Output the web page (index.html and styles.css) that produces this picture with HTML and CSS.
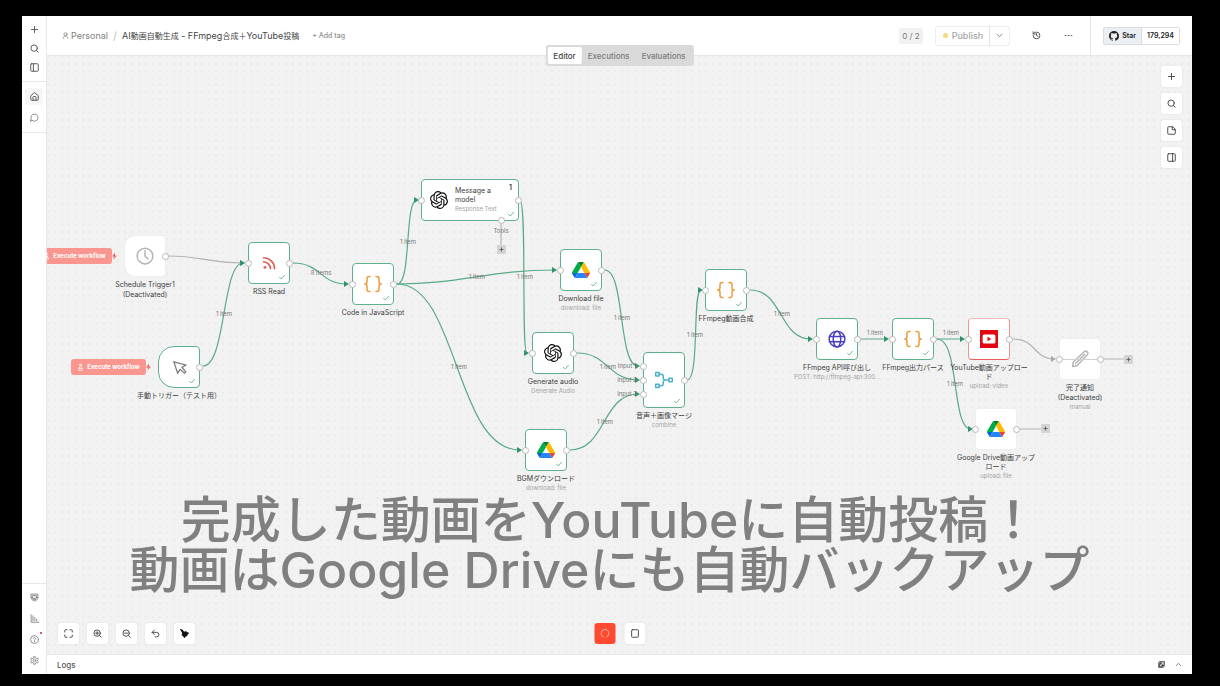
FILE: index.html
```html
<!DOCTYPE html>
<html lang="ja">
<head>
<meta charset="utf-8">
<title>AI動画自動生成 - FFmpeg合成＋YouTube投稿</title>
<link rel="stylesheet" href="styles.css">
</head>
<body>
<svg class="sprite" aria-hidden="true">
  <symbol id="plus" viewBox="0 0 24 24"><path d="M4 12h16M12 4v16"/></symbol>
  <symbol id="search" viewBox="0 0 24 24"><circle cx="11" cy="11" r="8.5"/><path d="m17 17 5 5"/></symbol>
  <symbol id="panel-left" viewBox="0 0 24 24"><rect x="2" y="2" width="20" height="20" rx="2"/><path d="M9 2v20"/></symbol>
  <symbol id="panel-right" viewBox="0 0 24 24"><rect x="2" y="2" width="20" height="20" rx="2"/><path d="M15 2v20"/></symbol>
  <symbol id="home" viewBox="0 0 24 24"><path d="M2 11a3 3 0 0 1 1-2l7-6a3 3 0 0 1 4 0l7 6a3 3 0 0 1 1 2v9a2 2 0 0 1-2 2H4a2 2 0 0 1-2-2z"/><path d="M8 22v-8a2 2 0 0 1 2-2h4a2 2 0 0 1 2 2v8"/></symbol>
  <symbol id="chat" viewBox="0 0 24 24"><path d="M6 20a9.500 9.500 0 1 0-3-4L1.500 22z"/></symbol>
  <symbol id="box" viewBox="0 0 24 24"><path d="M3 3h18v8c0 6-4 10-9 10s-9-4-9-10z"/><path d="M7 7h10v7H7zM3 12h4M17 12h4M9 17h6"/></symbol>
  <symbol id="chart" viewBox="0 0 24 24"><path d="M3 2v20h20M8 5v13M13 10v8M18 14v4"/></symbol>
  <symbol id="help" viewBox="0 0 24 24"><circle cx="12" cy="12" r="10.500"/><path d="M9 9.500a3 3 0 1 1 4.500 2.600c-1 .6-1.500 1-1.500 2M12 17v1"/></symbol>
  <symbol id="gear" viewBox="0 0 24 24"><path d="M10 2h4l.6 3 2.500 1.400 2.900-1 2 3.500-2.300 2v2.200l2.300 2-2 3.500-2.900-1-2.500 1.400-.6 3h-4l-.6-3-2.500-1.400-2.900 1-2-3.500 2.300-2v-2.200l-2.300-2 2-3.500 2.900 1L9.400 5z"/><circle cx="12" cy="12" r="3.500"/></symbol>
  <symbol id="user" viewBox="0 0 24 24"><circle cx="12" cy="8" r="5.500"/><path d="M4 22c0-5 3-8 8-8s8 3 8 8"/></symbol>
  <symbol id="chevron" viewBox="0 0 24 24"><path d="m4 8 8 8 8-8"/></symbol>
  <symbol id="chevron-up" viewBox="0 0 24 24"><path d="m4 16 8-8 8 8"/></symbol>
  <symbol id="history" viewBox="0 0 24 24"><path d="M3 12a9 9 0 1 0 9-9 10 10 0 0 0-6.700 2.700L3 8M3 2v6h6M12 7v5l4 2"/></symbol>
  <symbol id="more" viewBox="0 0 24 24"><path d="M3 12h2M11 12h2M19 12h2"/></symbol>
  <symbol id="note" viewBox="0 0 24 24"><path d="M14 2H4a2 2 0 0 0-2 2v16a2 2 0 0 0 2 2h16a2 2 0 0 0 2-2V10zM14 2v8h8"/></symbol>
  <symbol id="fit" viewBox="0 0 24 24"><path d="M2 8V4a2 2 0 0 1 2-2h4M16 2h4a2 2 0 0 1 2 2v4M22 16v4a2 2 0 0 1-2 2h-4M8 22H4a2 2 0 0 1-2-2v-4"/></symbol>
  <symbol id="zoom-in" viewBox="0 0 24 24"><circle cx="11" cy="11" r="8.500"/><path d="m17 17 5 5M7 11h8M11 7v8"/></symbol>
  <symbol id="zoom-out" viewBox="0 0 24 24"><circle cx="11" cy="11" r="8.500"/><path d="m17 17 5 5M7 11h8"/></symbol>
  <symbol id="undo" viewBox="0 0 24 24"><path d="M9 15 3 9l6-6M3 9h12a6 6 0 0 1 0 12h-4"/></symbol>
  <symbol id="tidy" viewBox="0 0 24 24"><path d="M-1-1l8 3 4 5 5-2 2 3 7 2-5 5-1 4-4 1-3 5-4-6-4-3 2-5z" fill="currentColor" stroke="none"/></symbol>
  <symbol id="stop" viewBox="0 0 24 24"><rect x="3" y="2" width="18" height="20" rx="2"/></symbol>
  <symbol id="spinner" viewBox="0 0 24 24"><path d="M7 21a10.500 10.500 0 1 1 10 0"/></symbol>
  <symbol id="popout" viewBox="0 0 24 24"><path d="M6 2h16v16H6zM2 6v16h16" fill="currentColor"/><path d="M10 14l7-7M12 6h6v6" stroke="#fff"/></symbol>
  <symbol id="flask" viewBox="0 0 24 24"><path d="M9 2h6M10 2v7l-5 10a2 2 0 0 0 2 3h10a2 2 0 0 0 2-3L14 9V2M8 15h8"/></symbol>
  <symbol id="bolt" viewBox="0 0 10 14"><path d="M6 0 0 8h4l-1 6 7-8H6z" fill="currentColor" stroke="none"/></symbol>
  <symbol id="check" viewBox="0 0 24 24"><path d="m2 13 7 7L22 5"/></symbol>
  <symbol id="clock" viewBox="0 0 24 24"><circle cx="12" cy="12" r="10.500"/><path d="M12 5v7l4 4"/></symbol>
  <symbol id="pointer" viewBox="0 0 24 24"><path d="m3 3 6 18 4-6 7 6 2-2-6-7 6-4z" stroke-linejoin="miter"/></symbol>
  <symbol id="rss" viewBox="0 0 24 24"><circle cx="5" cy="19.500" r="2.500" fill="currentColor" stroke="none"/><path d="M3 10a12 12 0 0 1 11.500 11.500M3 3a19 19 0 0 1 18.500 18.500"/></symbol>
  <symbol id="braces" viewBox="0 0 24 24"><path d="M8 2H6.500Q4 2 4 5v4q0 3-3 3 3 0 3 3v4q0 3 2.500 3H8M16 2h1.500Q20 2 20 5v4q0 3 3 3-3 0-3 3v4q0 3-2.500 3H16"/></symbol>
  <symbol id="globe" viewBox="0 0 24 24"><circle cx="12" cy="12" r="10.500"/><ellipse cx="12" cy="12" rx="5" ry="10.500"/><path d="M2 8.500h20M2 15.500h20"/></symbol>
  <symbol id="merge" viewBox="0 0 24 24"><rect x="1" y="2" width="4.500" height="4.500"/><rect x="1" y="17.500" width="4.500" height="4.500"/><rect x="18.500" y="9.800" width="4.500" height="4.500"/><path d="M5.500 4.300H8q3 0 3 3v2q0 2.700 3 2.700h4.500M5.500 19.700H8q3 0 3-3v-2q0-2.700 3-2.700"/></symbol>
  <symbol id="pencil" viewBox="0 0 24 24"><path d="M2 22l1-6L18 2q2-1 3 0l1 1q1 1 0 3L8 21zM6 18 18 6"/></symbol>
  <symbol id="youtube" viewBox="0 0 24 24"><path d="M0 0h24v24H0z" fill="#e20613" stroke="none"/><rect x="3.500" y="6" width="17" height="12" rx="2" fill="#fff" stroke="none"/><path d="M10 9v6l5-3z" fill="#e20613" stroke="none"/></symbol>
  <symbol id="openai" viewBox="0 0 24 24"><path fill="#111" stroke="none" d="M22.2819 9.8211a5.9847 5.9847 0 0 0-.5157-4.9108 6.0462 6.0462 0 0 0-6.5098-2.9A6.0651 6.0651 0 0 0 4.9807 4.1818a5.9847 5.9847 0 0 0-3.9977 2.9 6.0462 6.0462 0 0 0 .7427 7.0966 5.98 5.98 0 0 0 .511 4.9107 6.051 6.051 0 0 0 6.5146 2.9001A5.9847 5.9847 0 0 0 13.2599 24a6.0557 6.0557 0 0 0 5.7718-4.2058 5.9894 5.9894 0 0 0 3.9977-2.9001 6.0557 6.0557 0 0 0-.7475-7.0729zm-9.022 12.6081a4.4755 4.4755 0 0 1-2.8764-1.0408l.1419-.0804 4.7783-2.7582a.7948.7948 0 0 0 .3927-.6813v-6.7369l2.02 1.1686a.071.071 0 0 1 .038.052v5.5826a4.504 4.504 0 0 1-4.4945 4.4944zm-9.6607-4.1254a4.4708 4.4708 0 0 1-.5346-3.0137l.142.0852 4.783 2.7582a.7712.7712 0 0 0 .7806 0l5.8428-3.3685v2.3324a.0804.0804 0 0 1-.0332.0615L9.74 19.9502a4.4992 4.4992 0 0 1-6.1408-1.6464zM2.3408 7.8956a4.485 4.485 0 0 1 2.3655-1.9728V11.6a.7664.7664 0 0 0 .3879.6765l5.8144 3.3543-2.0201 1.1685a.0757.0757 0 0 1-.071 0l-4.8303-2.7865A4.504 4.504 0 0 1 2.3408 7.872zm16.5963 3.8558L13.1038 8.364 15.1192 7.2a.0757.0757 0 0 1 .071 0l4.8303 2.7913a4.4944 4.4944 0 0 1-.6765 8.1042v-5.6772a.79.79 0 0 0-.407-.667zm2.0107-3.0231l-.142-.0852-4.7735-2.7818a.7759.7759 0 0 0-.7854 0L9.409 9.2297V6.8974a.0662.0662 0 0 1 .0284-.0615l4.8303-2.7866a4.4992 4.4992 0 0 1 6.6802 4.66zM8.3065 12.863l-2.02-1.1638a.0804.0804 0 0 1-.038-.0567V6.0742a4.4992 4.4992 0 0 1 7.3757-3.4537l-.142.0805L8.704 5.459a.7948.7948 0 0 0-.3927.6813zm1.0976-2.3654l2.602-1.4998 2.6069 1.4998v2.9994l-2.5974 1.4997-2.6067-1.4997Z"/></symbol>
  <symbol id="github" viewBox="0 0 16 16"><path fill="currentColor" stroke="none" d="M8 0C3.58 0 0 3.58 0 8c0 3.54 2.29 6.53 5.47 7.59.4.07.55-.17.55-.38 0-.19-.01-.82-.01-1.49-2.01.37-2.53-.49-2.69-.94-.09-.23-.48-.94-.82-1.13-.28-.15-.68-.52-.01-.53.63-.01 1.08.58 1.23.82.72 1.21 1.87.87 2.33.66.07-.52.28-.87.51-1.07-1.78-.2-3.64-.89-3.64-3.95 0-.87.31-1.59.82-2.15-.08-.2-.36-1.02.08-2.12 0 0 .67-.21 2.2.82.64-.18 1.32-.27 2-.27s1.36.09 2 .27c1.53-1.04 2.2-.82 2.2-.82.44 1.1.16 1.92.08 2.12.51.56.82 1.27.82 2.15 0 3.07-1.87 3.75-3.65 3.95.29.25.54.73.54 1.48 0 1.07-.01 1.93-.01 2.2 0 .21.15.46.55.38A8.01 8.01 0 0 0 16 8c0-4.42-3.58-8-8-8z"/></symbol>
  <symbol id="drive" viewBox="0 0 87.300 78"><g stroke="none"><path fill="#0066da" d="m6.6 66.850 3.850 6.650c.8 1.400 1.950 2.500 3.300 3.300l13.750-23.800H0c0 1.550.4 3.100 1.200 4.500z"/><path fill="#00ac47" d="M43.650 25 29.900 1.200c-1.350.8-2.500 1.900-3.300 3.300l-25.400 44A9 9 0 0 0 0 53h27.500z"/><path fill="#ea4335" d="M73.550 76.800c1.350-.8 2.500-1.900 3.300-3.300l1.600-2.750 7.650-13.250c.8-1.400 1.200-2.950 1.200-4.500H59.800l5.850 11.500z"/><path fill="#00832d" d="M43.650 25 57.400 1.200C56.050.4 54.500 0 52.900 0H34.400c-1.600 0-3.150.450-4.500 1.200z"/><path fill="#2684fc" d="M59.800 53H27.500L13.750 76.800c1.350.8 2.900 1.200 4.500 1.200h50.800c1.600 0 3.150-.450 4.500-1.200z"/><path fill="#ffba00" d="m73.400 26.500-12.700-22c-.8-1.400-1.950-2.500-3.300-3.300L43.650 25 59.800 53h27.450c0-1.550-.4-3.100-1.200-4.500z"/></g></symbol>
</svg>

<div class="app">
  <nav class="sidebar" aria-label="Main">
    <div class="side-group">
      <button class="side-btn" aria-label="Create"><svg class="icon"><use href="#plus"/></svg></button>
      <button class="side-btn" aria-label="Search"><svg class="icon"><use href="#search"/></svg></button>
      <button class="side-btn" aria-label="Toggle sidebar"><svg class="icon"><use href="#panel-left"/></svg></button>
    </div>
    <div class="side-group side-links">
      <a class="side-btn active" href="#home" aria-label="Overview"><svg class="icon"><use href="#home"/></svg></a>
      <a class="side-btn" href="#chat" aria-label="Chat"><svg class="icon muted"><use href="#chat"/></svg></a>
    </div>
    <div class="side-group side-bottom">
      <a class="side-btn" href="#templates" aria-label="Templates"><svg class="icon muted"><use href="#box"/></svg></a>
      <a class="side-btn" href="#insights" aria-label="Insights"><svg class="icon muted"><use href="#chart"/></svg></a>
      <button class="side-btn" aria-label="Help"><svg class="icon muted"><use href="#help"/></svg><span class="alert-dot"></span></button>
      <button class="side-btn" aria-label="Settings"><svg class="icon muted"><use href="#gear"/></svg></button>
    </div>
  </nav>

  <main class="main">
    <header class="header">
      <div class="crumbs">
        <a class="project" href="#personal"><svg class="icon small"><use href="#user"/></svg>Personal</a>
        <span class="slash">/</span>
        <h1 class="title">AI<span class="kana">動画自動生成</span> - FFmpeg<span class="kana">合成＋</span>YouTube<span class="kana">投稿</span></h1>
        <button class="add-tag">+ Add tag</button>
      </div>
      <div class="actions">
        <span class="counter">0 / 2</span>
        <div class="publish">
          <button class="publish-main"><span class="status-dot"></span>Publish</button>
          <button class="publish-more" aria-label="Publish options"><svg class="icon small"><use href="#chevron"/></svg></button>
        </div>
        <button class="plain-btn" aria-label="History"><svg class="icon"><use href="#history"/></svg></button>
        <button class="plain-btn" aria-label="More"><svg class="icon"><use href="#more"/></svg></button>
      </div>
      <div class="github">
        <a class="star" href="#star"><svg class="icon mark"><use href="#github"/></svg>Star</a>
        <a class="stars" href="#stargazers">179,294</a>
      </div>
      <div class="tabs">
        <button class="tab selected">Editor</button>
        <button class="tab">Executions</button>
        <button class="tab">Evaluations</button>
      </div>
    </header>

    <section class="canvas" aria-label="Workflow">
      <div class="viewport">
        <svg class="edges" width="1220" height="686">
          <defs>
            <marker id="arrow" viewBox="0 0 5 6" refX="3" refY="3" markerWidth="5" markerHeight="6" markerUnits="userSpaceOnUse"><path d="M0 0l5 3-5 3z" class="arrow"/></marker>
            <marker id="arrow-idle" viewBox="0 0 5 6" refX="3" refY="3" markerWidth="5" markerHeight="6" markerUnits="userSpaceOnUse"><path d="M0 0l5 3-5 3z" class="arrow-idle"/></marker>
          </defs>
          <g class="idle">
            <path d="M168 256C202 256 208 263 243 263" marker-end="url(#arrow-idle)"/>
            <path d="M1013 339C1036 339 1034 359 1054 359" marker-end="url(#arrow-idle)"/>
            <path d="M1103 359h22M1020 429h22M501 221v24"/>
          </g>
          <g class="done">
            <path d="M203 366C226 366 222 263 243 263" marker-end="url(#arrow)"/>
            <path d="M293 263C321 263 320 284 347 284" marker-end="url(#arrow)"/>
            <path d="M397 284C412 284 404 200 417 200" marker-end="url(#arrow)"/>
            <path d="M397 284C460 284 490 270 555 270" marker-end="url(#arrow)"/>
            <path d="M397 284C458 284 455 450 520 450" marker-end="url(#arrow)"/>
            <path d="M520 201C527 201 521 353 527 353" marker-end="url(#arrow)"/>
            <path d="M605 270C625 270 618 366 638 366" marker-end="url(#arrow)"/>
            <path d="M577 353C608 353 608 380 638 380" marker-end="url(#arrow)"/>
            <path d="M570 450C606 450 602 394 638 394" marker-end="url(#arrow)"/>
            <path d="M687 380C700 380 692 290 701 290" marker-end="url(#arrow)"/>
            <path d="M750 290C783 290 779 339 811 339" marker-end="url(#arrow)"/>
            <path d="M861 339h26" marker-end="url(#arrow)"/>
            <path d="M937 339h26" marker-end="url(#arrow)"/>
            <path d="M937 339C960 339 951 429 971 429" marker-end="url(#arrow)"/>
          </g>
          <g class="edge-label">
            <text x="224" y="316">1 item</text><text x="321" y="275">8 items</text><text x="408" y="244">1 item</text>
            <text x="477" y="279">1 item</text><text x="525" y="279">1 item</text><text x="622" y="320">1 item</text>
            <text x="608" y="369">1 item</text><text x="605" y="424">1 item</text><text x="459" y="369">1 item</text>
            <text x="695" y="337">1 item</text><text x="782" y="316">1 item</text><text x="875" y="335">1 item</text>
            <text x="951" y="335">1 item</text><text x="955" y="386">1 item</text>
            <text x="627" y="368">Input 1</text><text x="627" y="382">Input 2</text><text x="627" y="396">Input 3</text>
            <text x="501" y="233">Tools</text>
          </g>
        </svg>

        <button class="run run-schedule"><svg class="icon small"><use href="#flask"/></svg>Execute workflow<svg class="bolt"><use href="#bolt"/></svg></button>
        <button class="run run-manual"><svg class="icon small"><use href="#flask"/></svg>Execute workflow<svg class="bolt"><use href="#bolt"/></svg></button>

        <article class="node n-schedule idle-node trigger"><div class="box"><svg class="glyph gray"><use href="#clock"/></svg><i class="port out"></i></div><p class="name">Schedule Trigger1</p><p class="name second">(Deactivated)</p></article>
        <article class="node n-manual trigger round"><div class="box"><svg class="glyph dark"><use href="#pointer"/></svg><svg class="tick"><use href="#check"/></svg><i class="port out"></i></div><p class="name">手動トリガー（テスト用）</p></article>
        <article class="node n-rss"><div class="box"><svg class="glyph small-glyph red"><use href="#rss"/></svg><svg class="tick"><use href="#check"/></svg><i class="port in"></i><i class="port out"></i></div><p class="name">RSS Read</p></article>
        <article class="node n-code"><div class="box"><svg class="glyph orange"><use href="#braces"/></svg><svg class="tick"><use href="#check"/></svg><i class="port in"></i><i class="port out"></i></div><p class="name">Code in JavaScript</p></article>
        <article class="node n-message"><div class="box wide"><svg class="glyph"><use href="#openai"/></svg><div class="inner"><p class="name">Message a<br>model</p><p class="sub">Response Text</p></div><span class="count">1</span><svg class="tick"><use href="#check"/></svg><i class="port in"></i><i class="port out"></i><i class="port tools"></i></div></article>
        <article class="node n-download"><div class="box"><svg class="glyph"><use href="#drive"/></svg><svg class="tick"><use href="#check"/></svg><i class="port in"></i><i class="port out"></i></div><p class="name">Download file</p><p class="sub">download: file</p></article>
        <article class="node n-audio"><div class="box"><svg class="glyph"><use href="#openai"/></svg><svg class="tick"><use href="#check"/></svg><i class="port in"></i><i class="port out"></i></div><p class="name">Generate audio</p><p class="sub">Generate Audio</p></article>
        <article class="node n-bgm"><div class="box"><svg class="glyph"><use href="#drive"/></svg><svg class="tick"><use href="#check"/></svg><i class="port in"></i><i class="port out"></i></div><p class="name">BGMダウンロード</p><p class="sub">download: file</p></article>
        <article class="node n-merge"><div class="box tall"><svg class="glyph teal"><use href="#merge"/></svg><svg class="tick"><use href="#check"/></svg><i class="port in first"></i><i class="port in"></i><i class="port in third"></i><i class="port out"></i></div><p class="name">音声＋画像マージ</p><p class="sub">combine</p></article>
        <article class="node n-compose"><div class="box"><svg class="glyph orange"><use href="#braces"/></svg><svg class="tick"><use href="#check"/></svg><i class="port in"></i><i class="port out"></i></div><p class="name">FFmpeg動画合成</p></article>
        <article class="node n-api"><div class="box"><svg class="glyph indigo"><use href="#globe"/></svg><svg class="tick"><use href="#check"/></svg><i class="port in"></i><i class="port out"></i></div><p class="name">FFmpeg API呼び出し</p><p class="sub">POST: http://ffmpeg-api:300...</p></article>
        <article class="node n-parse"><div class="box"><svg class="glyph orange"><use href="#braces"/></svg><svg class="tick"><use href="#check"/></svg><i class="port in"></i><i class="port out"></i></div><p class="name">FFmpeg出力パース</p></article>
        <article class="node n-youtube running"><div class="box"><svg class="glyph"><use href="#youtube"/></svg><i class="port in"></i><i class="port out"></i></div><p class="name">YouTube動画アップロー<br>ド</p><p class="sub">upload: video</p></article>
        <article class="node n-notify idle-node"><div class="box struck"><svg class="glyph gray"><use href="#pencil"/></svg><i class="port in"></i><i class="port out"></i></div><p class="name">完了通知</p><p class="name second">(Deactivated)</p><p class="sub">manual</p></article>
        <article class="node n-backup idle-node"><div class="box"><svg class="glyph"><use href="#drive"/></svg><i class="port in"></i><i class="port out"></i></div><p class="name">Google Drive動画アップ<br>ロード</p><p class="sub">upload: file</p></article>

        <button class="add add-tool" aria-label="Add tool"><svg><use href="#plus"/></svg></button>
        <button class="add add-notify" aria-label="Add node"><svg><use href="#plus"/></svg></button>
        <button class="add add-backup" aria-label="Add node"><svg><use href="#plus"/></svg></button>
      </div>

      <div class="canvas-tools">
        <button class="tool" aria-label="Add node"><svg class="icon"><use href="#plus"/></svg></button>
        <button class="tool" aria-label="Search nodes"><svg class="icon"><use href="#search"/></svg></button>
        <button class="tool" aria-label="Add note"><svg class="icon"><use href="#note"/></svg></button>
        <button class="tool" aria-label="Toggle panel"><svg class="icon"><use href="#panel-right"/></svg></button>
      </div>

      <div class="view-controls">
        <button class="tool" aria-label="Fit view"><svg class="icon"><use href="#fit"/></svg></button>
        <button class="tool" aria-label="Zoom in"><svg class="icon"><use href="#zoom-in"/></svg></button>
        <button class="tool" aria-label="Zoom out"><svg class="icon"><use href="#zoom-out"/></svg></button>
        <button class="tool" aria-label="Undo"><svg class="icon"><use href="#undo"/></svg></button>
        <button class="tool" aria-label="Tidy up"><svg class="icon tidy"><use href="#tidy"/></svg></button>
      </div>

      <div class="run-controls">
        <button class="tool busy" aria-label="Running"><svg class="icon"><use href="#spinner"/></svg></button>
        <button class="tool" aria-label="Stop"><svg class="icon"><use href="#stop"/></svg></button>
      </div>

      <p class="caption">完成した動画を<span class="latin">YouTube</span>に自動投稿！<br>動画は<span class="latin">Google Drive</span>にも自動バックアップ</p>
    </section>

    <footer class="logs">
      <span>Logs</span>
      <div class="logs-actions">
        <button class="plain-btn" aria-label="Pop out"><svg class="icon small"><use href="#popout"/></svg></button>
        <button class="plain-btn" aria-label="Expand"><svg class="icon small"><use href="#chevron-up"/></svg></button>
      </div>
    </footer>
  </main>
</div>
</body>
</html>
```

FILE: styles.css
```css
* { box-sizing: border-box; margin: 0; }
body {
  height: 100vh;
  padding: 16px 28px 12px 22px;
  background: #000;
  color: #555;
  font: 8px/10px Inter, "Noto Sans CJK JP", sans-serif;
  overflow: hidden;
}
button { padding: 0; border: 0; background: none; color: inherit; font: inherit; }
a { color: inherit; text-decoration: none; }
svg { fill: none; stroke: currentColor; stroke-width: 2; stroke-linecap: round; stroke-linejoin: round; overflow: visible; }
.sprite { position: absolute; width: 0; height: 0; }
.icon { display: block; width: 9px; height: 9px; flex: none; stroke-width: 2.5; }
.icon.small { width: 7px; height: 7px; }
.muted { color: #888; }

.app { display: flex; height: 100%; background: #fff; }

.sidebar { display: flex; flex-direction: column; width: 25px; border-right: 1px solid #e8e8e8; }
.side-group { display: flex; flex-direction: column; align-items: center; gap: 2px; padding: 5px 0; border-bottom: 1px solid #e8e8e8; }
.side-btn { position: relative; display: grid; place-items: center; width: 18px; height: 17px; border-radius: 3px; }
.side-links { gap: 4px; padding: 6px 0; }
.active { background: #f6f6f6; }
.side-bottom { gap: 4px; margin-top: auto; padding: 5px 0; border-top: 1px solid #e8e8e8; border-bottom: 0; }
.alert-dot { position: absolute; top: 1px; right: 1px; width: 2px; height: 2px; border-radius: 50%; background: #c02040; }

.main { display: flex; flex: 1; flex-direction: column; min-width: 0; }
.header { position: relative; z-index: 1; display: flex; align-items: stretch; height: 40px; border-bottom: 1px solid #e6e6e6; }
.crumbs { display: flex; flex: 1; align-items: center; gap: 5px; padding-left: 15px; font-size: 9px; white-space: nowrap; }
.project { display: flex; align-items: center; gap: 2px; color: #808080; }
.slash { color: #c4c4c4; font-size: 11px; }
.title { font-size: 9px; font-weight: 400; color: #444; }
.kana { font-size: 8px; }
.add-tag { margin-left: 8px; color: #909090; font-size: 7px; font-weight: 500; }
.actions { display: flex; align-items: center; padding-right: 16px; }
.counter { padding: 3px; border-radius: 3px; background: #f1f1f1; color: #777; }
.publish { display: flex; height: 20px; margin: 0 21px 0 12px; border: 1px solid #ececec; border-radius: 3px; }
.publish-main { display: flex; align-items: center; gap: 4px; padding: 0 6px 0 7px; color: #a5a5a5; font-size: 9px; font-weight: 500; }
.status-dot { width: 5px; height: 5px; border-radius: 50%; background: #f6d978; }
.publish-more { display: grid; place-items: center; width: 20px; border-left: 1px solid #e4e4e4; }
.plain-btn { display: grid; place-items: center; width: 11px; height: 11px; }
.plain-btn + .plain-btn { margin-left: 21px; }
.github { display: flex; align-items: center; padding: 0 12px; border-left: 1px solid #e6e6e6; color: #222; font-size: 7px; font-weight: 600; }
.star, .stars { display: flex; align-items: center; gap: 3px; height: 18px; padding: 0 5px; border: 1px solid #dcdce0; }
.star { border-radius: 2px 0 0 2px; background: #ebeef2; }
.stars { border-left: 0; border-radius: 0 2px 2px 0; }
.mark { width: 10px; height: 10px; }
.tabs { position: absolute; top: 29px; left: 50%; display: flex; padding: 2px; border-radius: 3px; background: #dadada; transform: translateX(-50%); }
.tab { height: 17px; padding: 0 6px; border-radius: 2px; color: #7b7b7b; font-weight: 500; }
.selected { background: #fff; color: #444; }

.canvas { position: relative; flex: 1; overflow: hidden; background: #f2f2f2 radial-gradient(circle at 1px 1px, #ebebeb 1px, transparent 1px) 0 0 / 7px 7px; }
.viewport { position: absolute; top: 0; left: 0; transform: translate(-47px, -56px); }
.edges { position: absolute; top: 0; left: 0; }
.edges path { stroke-width: 1.2; }
.edges .arrow { fill: #2f9469; stroke: none; }
.edges .arrow-idle { fill: #a8a8a8; stroke: none; }
.done { stroke: #58aa86; }
.idle { stroke: #b4b4b4; }
.edge-label { fill: #777; stroke: none; font-size: 6px; text-anchor: middle; }

.node { position: absolute; display: flex; flex-direction: column; align-items: center; width: 42px; text-align: center; white-space: nowrap; }
.box { position: relative; display: grid; place-items: center; width: 42px; height: 42px; margin-bottom: 3px; border: 1px solid #5fb18c; border-radius: 4px; background: #fff; flex: none; }
.idle-node .box { border-color: #eee; }
.tall { height: 56px; }
.trigger .box { border-radius: 12px 4px 4px 12px; }
.round .box { border-radius: 16px 4px 4px 16px; }
.wide { display: flex; gap: 7px; width: 98px; padding-left: 8px; text-align: left; }
.running .box { border-color: #f6b8b4 #f0948f #ea5f5c #f0948f; }
.name { color: #3c3c3c; font-size: 7px; line-height: 9px; }
.second { margin-top: 1px; }
.sub { color: #a3a3a3; font-size: 6px; line-height: 10px; }
.glyph { width: 18px; height: 18px; }
.small-glyph { width: 14px; height: 14px; stroke-width: 3; }
.gray { color: #b5b5b5; }
.dark { width: 15px; height: 15px; color: #777; }
.red { color: #e0645e; }
.orange { color: #f09a3e; }
.indigo { color: #4840c0; }
.teal { color: #4fb0cc; }
.tick { position: absolute; right: 4px; bottom: 3px; width: 6px; height: 6px; color: #4aa67d; stroke-width: 3; }
.count { position: absolute; top: 3px; right: 6px; color: #333; font-size: 7px; font-weight: 600; }
.port { position: absolute; top: 50%; width: 7px; height: 7px; margin-top: -3px; border: 1px solid #b9b9b9; border-radius: 50%; background: #fff; }
.in { left: -4px; }
.out { right: -4px; }
.first { top: calc(50% - 14px); }
.third { top: calc(50% + 14px); }
.tools { top: 100%; right: 13px; }
.struck::before { content: ""; position: absolute; top: 50%; right: 0; left: 0; border-top: 1px solid #d0d0d0; }

.n-schedule { left: 124px; top: 235px; }
.n-manual { left: 158px; top: 346px; }
.n-rss { left: 248px; top: 242px; }
.n-code { left: 352px; top: 263px; }
.n-message { left: 421px; top: 179px; width: 98px; }
.n-download { left: 560px; top: 249px; }
.n-audio { left: 532px; top: 332px; }
.n-bgm { left: 525px; top: 429px; }
.n-merge { left: 643px; top: 352px; }
.n-compose { left: 705px; top: 269px; }
.n-api { left: 816px; top: 318px; }
.n-parse { left: 892px; top: 318px; }
.n-youtube { left: 968px; top: 318px; }
.n-notify { left: 1059px; top: 338px; }
.n-backup { left: 975px; top: 408px; }

.run { position: absolute; display: flex; align-items: center; justify-content: center; gap: 3px; width: 75px; height: 16px; border-radius: 3px; background: #f9968f; color: #fff; font-size: 6px; font-weight: 700; white-space: nowrap; }
.run-schedule { left: 37px; top: 248px; }
.run-manual { left: 71px; top: 359px; }
.bolt { position: absolute; top: 4px; right: -5px; width: 5px; height: 8px; color: #ee6a64; }
.add { position: absolute; display: grid; place-items: center; width: 9px; height: 9px; border-radius: 1px; background: #d4d4d4; color: #555; }
.add svg { width: 5px; height: 5px; stroke-width: 4; }
.add-tool { left: 497px; top: 245px; }
.add-notify { left: 1124px; top: 355px; }
.add-backup { left: 1041px; top: 424px; }

.tool { display: grid; place-items: center; width: 21px; height: 21px; border-radius: 3px; background: #fff; box-shadow: 0 0 2px #ddd; color: #444; }
.busy { background: #ff4a32; color: #ffc0a8; box-shadow: none; }
.tidy { color: #111; }
.canvas-tools { position: absolute; top: 10px; right: 10px; display: flex; flex-direction: column; gap: 6px; }
.view-controls { position: absolute; bottom: 10px; left: 11px; display: flex; gap: 8px; }
.run-controls { position: absolute; bottom: 10px; left: 50%; display: flex; gap: 9px; transform: translateX(-50%); }
.caption { position: absolute; right: 20px; bottom: 63px; left: 0; color: #808080; font: 500 50px/50px "Noto Sans CJK JP", sans-serif; text-align: center; white-space: nowrap; }
.latin { font-family: Inter, sans-serif; line-height: 0; }

.logs { display: flex; align-items: center; justify-content: space-between; height: 20px; padding: 0 8px 0 10px; border-top: 1px solid #e8e8e8; font-weight: 500; }
.logs-actions { display: flex; }
.logs-actions .plain-btn + .plain-btn { margin-left: 6px; }
```
